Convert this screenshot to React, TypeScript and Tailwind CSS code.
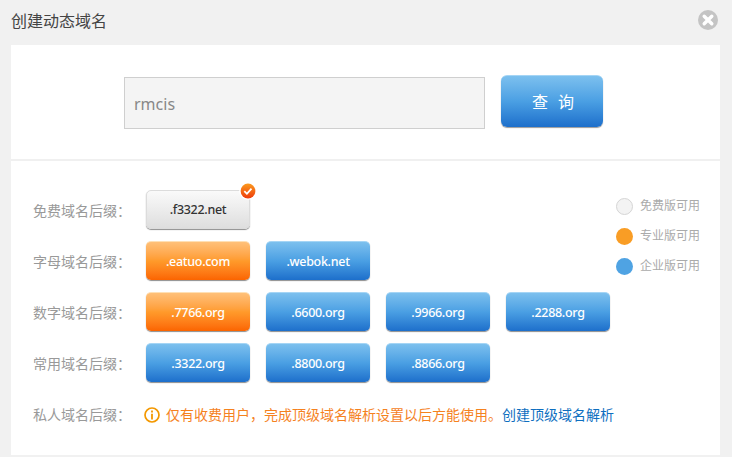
const blue = 'border-t border-[#a5d5f5] bg-gradient-to-b from-[#7cc0ee] via-[#4a9fe3] to-[#1d6fcb]'
const orange = 'border-t border-[#ffe0b5] bg-gradient-to-b from-[#ffc078] via-[#ff9a2a] to-[#fb6400]'

function Suffix({ name, tone }: { name: string; tone: string }) {
  return (
    <button
      type="button"
      className={`flex h-[39px] w-[104px] items-center justify-center rounded-[5px] pt-[2px] text-[12.5px] font-medium tracking-[-0.3px] text-white shadow-[0_1px_1px_rgba(0,0,0,0.45)] ${tone}`}
    >
      {name}
    </button>
  )
}

function Row({ label, children }: { label: string; children: React.ReactNode }) {
  return (
    <div className="flex h-[39px] items-center">
      <span className="w-[113px] pt-[2px] text-[14px] text-[#999]">{label}</span>
      <div className="flex gap-4">{children}</div>
    </div>
  )
}

function Legend({ label, dot }: { label: string; dot: string }) {
  return (
    <div className="flex h-[18px] items-center gap-[7px]">
      <span className={`h-[17px] w-[17px] rounded-full ${dot}`} />
      <span className="text-[12px] text-[#aaa]">{label}</span>
    </div>
  )
}

export default function App() {
  return (
    <div className="h-[457px] w-[732px] overflow-hidden bg-[#f1f1f1] font-['Noto_Sans','Noto_Sans_CJK_SC',sans-serif]">
      <header className="flex h-[45px] items-center justify-between pl-[11px] pr-[14px]">
        <h1 className="pb-[3px] text-[16px] font-normal text-[#444]">创建动态域名</h1>
        <svg width="20" height="20" viewBox="0 0 20 20" className="mb-[5px]">
          <circle cx="10" cy="10" r="10" fill="#c4c4c4" />
          <path d="M6.2 6.2l7.6 7.6M13.8 6.2l-7.6 7.6" stroke="#fff" strokeWidth="3.4" strokeLinecap="round" />
        </svg>
      </header>

      <main className="ml-[11px] h-[410px] w-[709px] bg-white">
        <div className="flex h-[116px] items-start gap-4 border-b-2 border-[#f0f0f0] pl-[113px] pt-[30px]">
          <div className="mt-[2px] flex h-[52px] w-[361px] items-center border border-[#cfcfcf] bg-[#f4f4f4] pl-[9px] pt-[2px] text-[16px] text-[#888]">
            rmcis
          </div>
          <button
            type="button"
            className={`h-[52px] w-[102px] rounded-[6px] pl-[12px] text-[16px] tracking-[10px] text-white shadow-[0_1px_1px_rgba(0,0,0,0.4)] ${blue}`}
          >
            查询
          </button>
        </div>

        <div className="flex justify-between pl-[22px] pr-[20px] pt-[29px]">
          <div className="flex flex-col gap-3">
            <Row label="免费域名后缀：">
              <div className="relative">
                <Suffix
                  name=".f3322.net"
                  tone="!text-[#333] border border-[#dcdcdc] bg-gradient-to-b from-[#fafafa] to-[#dedede]"
                />
                <svg width="18" height="18" viewBox="0 0 18 18" className="absolute right-[-7px] top-[-8px]">
                  <defs>
                    <linearGradient id="tick" x1="0" y1="0" x2="0" y2="1">
                      <stop offset="0" stopColor="#fb9a1e" />
                      <stop offset="1" stopColor="#ee3b0b" />
                    </linearGradient>
                  </defs>
                  <circle cx="9" cy="9" r="8.8" fill="#fff" />
                  <circle cx="9" cy="9" r="7.4" fill="url(#tick)" />
                  <path d="M5.3 9.2l2.6 2.6 4.6-5.2" fill="none" stroke="#fff" strokeWidth="1.8" />
                </svg>
              </div>
            </Row>
            <Row label="字母域名后缀：">
              <Suffix name=".eatuo.com" tone={orange} />
              <Suffix name=".webok.net" tone={blue} />
            </Row>
            <Row label="数字域名后缀：">
              <Suffix name=".7766.org" tone={orange} />
              <Suffix name=".6600.org" tone={blue} />
              <Suffix name=".9966.org" tone={blue} />
              <Suffix name=".2288.org" tone={blue} />
            </Row>
            <Row label="常用域名后缀：">
              <Suffix name=".3322.org" tone={blue} />
              <Suffix name=".8800.org" tone={blue} />
              <Suffix name=".8866.org" tone={blue} />
            </Row>
            <div className="mt-px flex h-[39px] items-center">
              <span className="w-[111px] text-[14px] text-[#999]">私人域名后缀：</span>
              <svg width="16" height="16" viewBox="0 0 16 16" className="mr-[6px]">
                <circle cx="8" cy="8" r="7" fill="none" stroke="#f39800" strokeWidth="1.7" />
                <path d="M8 3.4v2M8 6.8v5.6" stroke="#f39800" strokeWidth="1.8" />
              </svg>
              <span className="whitespace-nowrap text-[14px] text-[#f5821f]">仅有收费用户，完成顶级域名解析设置以后方能使用。</span>
              <a className="whitespace-nowrap text-[14px] text-[#0f6fbf]">创建顶级域名解析</a>
            </div>
          </div>

          <div className="flex flex-col gap-3 pt-[7px]">
            <Legend label="免费版可用" dot="border border-[#d5d5d5] bg-[#f3f3f3]" />
            <Legend label="专业版可用" dot="bg-[#f99d25]" />
            <Legend label="企业版可用" dot="bg-[#4fa3e3]" />
          </div>
        </div>
      </main>
    </div>
  )
}
